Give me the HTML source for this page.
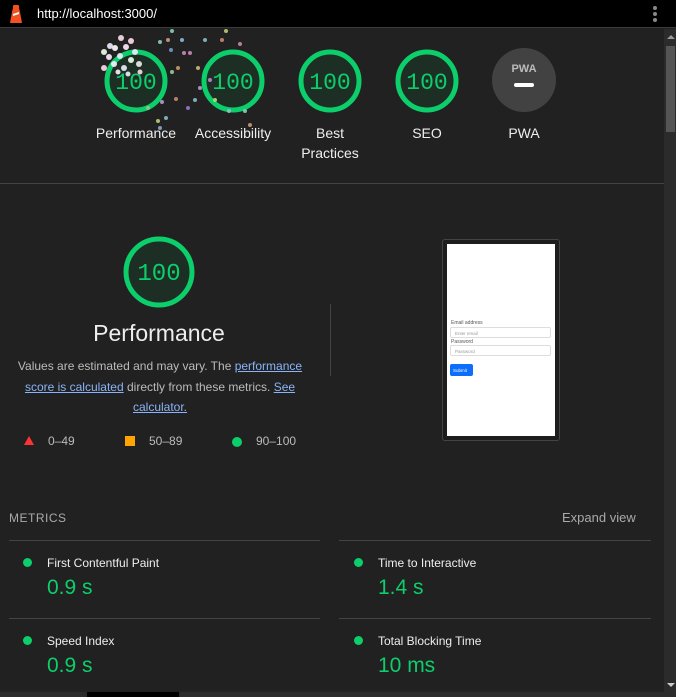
<!DOCTYPE html>
<html><head><meta charset="utf-8"><style>
*{margin:0;padding:0;box-sizing:border-box}
body{width:676px;height:697px;background:#212121;overflow:hidden;position:relative;font-family:"Liberation Sans",Arial,sans-serif;color:#fff}
.a{position:absolute}
.bar{left:0;top:0;width:676px;height:28px;background:#000;border-bottom:1px solid #3a3a3a}
.url{left:37px;top:6px;font-size:13px;color:#fff}
.lbl{font-size:14px;text-align:center;width:100px;line-height:20px;color:#eee}
a{color:#8ab4f8;text-decoration:underline}
.mt{font-size:12px;color:#eee}
.mv{font-size:21px;color:#0cce6b}
.dot{width:9px;height:9px;border-radius:50%;background:#0cce6b}
.hr{height:1px;background:#444}
</style></head><body>
<div class="a bar"></div>
<svg class="a" style="left:9px;top:5px" width="14" height="19" viewBox="0 0 14 19"><path d="M4 3h6l1 4 2 11H1L3 7z" fill="#f4511e"/><rect x="4" y="0" width="6" height="4" rx="1" fill="#f4511e"/><path d="M4 9l6-2v2l-6 2z" fill="#fff"/></svg>
<div class="a url">http://localhost:3000/</div>
<div class="a" style="left:653px;top:6px;width:4px;height:4px;border-radius:50%;background:#888"></div>
<div class="a" style="left:653px;top:12px;width:4px;height:4px;border-radius:50%;background:#888"></div>
<div class="a" style="left:653px;top:18px;width:4px;height:4px;border-radius:50%;background:#888"></div>
<div class="a" style="left:664px;top:29px;width:12px;height:668px;background:#2b2b2b"></div>
<div class="a" style="left:666px;top:46px;width:9px;height:86px;background:#555"></div>
<div class="a" style="left:667px;top:35px;width:0;height:0;border-left:4px solid transparent;border-right:4px solid transparent;border-bottom:4px solid #999"></div>
<div class="a" style="left:667px;top:683px;width:0;height:0;border-left:4px solid transparent;border-right:4px solid transparent;border-top:4px solid #ccc"></div>
<div class="a" style="left:0;top:692px;width:664px;height:5px;background:#2b2b2b"></div>
<div class="a" style="left:87px;top:692px;width:92px;height:5px;background:#000"></div>

<svg class="a" style="left:0;top:28px" width="664" height="140">
<g font-family="Liberation Mono, DejaVu Sans Mono, monospace" font-size="23" fill="#0cce6b" text-anchor="middle">
<circle cx="136" cy="53" r="29" fill="#1d2e24" stroke="#0cce6b" stroke-width="5"/><text x="136" y="61">100</text>
<circle cx="233" cy="53" r="29" fill="#1d2e24" stroke="#0cce6b" stroke-width="5"/><text x="233" y="61">100</text>
<circle cx="330" cy="53" r="29" fill="#1d2e24" stroke="#0cce6b" stroke-width="5"/><text x="330" y="61">100</text>
<circle cx="427" cy="53" r="29" fill="#1d2e24" stroke="#0cce6b" stroke-width="5"/><text x="427" y="61">100</text>
</g>
<circle cx="524" cy="52" r="32" fill="#424242"/>
<text x="524" y="44" font-size="11" font-weight="bold" fill="#bbb" text-anchor="middle" font-family="Liberation Sans">PWA</text>
<rect x="514" y="55" width="20" height="4" rx="2" fill="#fff"/>
<g opacity="0.9">
<circle cx="121" cy="10" r="3" fill="#fde"/><circle cx="131" cy="13" r="3" fill="#fde"/><circle cx="110" cy="18" r="3" fill="#eef"/><circle cx="104" cy="24" r="3" fill="#efe"/><circle cx="115" cy="20" r="3" fill="#fff"/><circle cx="126" cy="19" r="3" fill="#fef"/><circle cx="135" cy="24" r="3" fill="#eef"/><circle cx="109" cy="29" r="3" fill="#fef"/><circle cx="120" cy="28" r="3" fill="#eef"/><circle cx="131" cy="32" r="3" fill="#efe"/><circle cx="114" cy="36" r="3" fill="#fef"/><circle cx="104" cy="40" r="3" fill="#fde"/><circle cx="124" cy="40" r="3" fill="#eef"/><circle cx="139" cy="36" r="3" fill="#eee"/><circle cx="140" cy="44" r="2.5" fill="#fde"/><circle cx="118" cy="44" r="2.5" fill="#fef"/><circle cx="128" cy="46" r="2.5" fill="#eef"/>
<circle cx="172" cy="3" r="2" fill="#8cb"/><circle cx="160" cy="14" r="2" fill="#8cb"/><circle cx="168" cy="12" r="2" fill="#c98"/><circle cx="182" cy="12" r="2" fill="#8bd"/><circle cx="171" cy="22" r="2" fill="#79c"/><circle cx="184" cy="25" r="2" fill="#c8b"/><circle cx="190" cy="25" r="2" fill="#c8b"/><circle cx="178" cy="40" r="2" fill="#c96"/><circle cx="198" cy="40" r="2" fill="#cb7"/><circle cx="205" cy="12" r="2" fill="#8bc"/><circle cx="222" cy="12" r="2" fill="#c87"/><circle cx="240" cy="16" r="2" fill="#c8a"/><circle cx="226" cy="3" r="2" fill="#bc7"/><circle cx="162" cy="74" r="2" fill="#b9c"/><circle cx="176" cy="71" r="2" fill="#c87"/><circle cx="148" cy="80" r="2" fill="#8c8"/><circle cx="188" cy="80" r="2" fill="#97c"/><circle cx="195" cy="72" r="2" fill="#8bc"/><circle cx="200" cy="60" r="2" fill="#b9c"/><circle cx="215" cy="72" r="2" fill="#bd7"/><circle cx="229" cy="83" r="2" fill="#9bc"/><circle cx="245" cy="83" r="2" fill="#8cb"/><circle cx="250" cy="97" r="2" fill="#c97"/><circle cx="158" cy="93" r="2" fill="#bc7"/><circle cx="166" cy="90" r="2" fill="#8bc"/><circle cx="172" cy="44" r="2" fill="#9c9"/><circle cx="210" cy="52" r="2" fill="#b8c"/><circle cx="160" cy="100" r="2" fill="#8ac"/>
</g>
</svg>
<div class="a lbl" style="left:86px;top:123px">Performance</div>
<div class="a lbl" style="left:183px;top:123px">Accessibility</div>
<div class="a lbl" style="left:280px;top:123px">Best<br>Practices</div>
<div class="a lbl" style="left:377px;top:123px">SEO</div>
<div class="a lbl" style="left:474px;top:123px">PWA</div>
<div class="a hr" style="left:0;top:183px;width:664px"></div>

<svg class="a" style="left:120px;top:234px" width="80" height="80"><circle cx="39" cy="38" r="33" fill="#1d2e24" stroke="#0cce6b" stroke-width="5"/><text x="39" y="46" text-anchor="middle" font-family="Liberation Mono, monospace" font-size="24" fill="#0cce6b">100</text></svg>
<div class="a" style="left:0;top:320px;width:318px;text-align:center;font-size:23px;color:#eee">Performance</div>
<div class="a" style="left:12px;top:356px;width:296px;text-align:center;font-size:12px;line-height:20.5px;color:#bbb">Values are estimated and may vary. The <a>performance score is calculated</a> directly from these metrics. <a>See calculator.</a></div>
<div class="a" style="left:330px;top:304px;width:1px;height:72px;background:#444"></div>
<div class="a" style="left:24px;top:436px;width:0;height:0;border-left:5px solid transparent;border-right:5px solid transparent;border-bottom:9px solid #ff3333"></div>
<div class="a" style="left:48px;top:434px;font-size:12px;color:#bbb">0–49</div>
<div class="a" style="left:125px;top:436px;width:10px;height:10px;background:#ffa400"></div>
<div class="a" style="left:149px;top:434px;font-size:12px;color:#bbb">50–89</div>
<div class="a dot" style="left:232px;top:437px;width:10px;height:10px"></div>
<div class="a" style="left:256px;top:434px;font-size:12px;color:#bbb">90–100</div>

<div class="a" style="left:442px;top:239px;width:118px;height:202px;border:1px solid #444;border-radius:3px;background:#1d1d1d"></div>
<div class="a" style="left:447px;top:244px;width:108px;height:192px;background:#fff"></div>
<div class="a" style="left:451px;top:320px;font-size:5px;color:#555">Email address</div>
<div class="a" style="left:450px;top:327px;width:101px;height:11px;border:1px solid #ddd;border-radius:2px;font-size:4.5px;color:#999;padding:3px 4px">Enter email</div>
<div class="a" style="left:451px;top:339px;font-size:5px;color:#555">Password</div>
<div class="a" style="left:450px;top:345px;width:101px;height:11px;border:1px solid #ddd;border-radius:2px;font-size:4.5px;color:#999;padding:3px 4px">Password</div>
<div class="a" style="left:450px;top:364px;width:23px;height:12px;background:#0d6efd;border-radius:2px;font-size:4.5px;color:#fff;padding:4px 3px">Submit</div>

<div class="a" style="left:9px;top:511px;font-size:12px;color:#aaa;letter-spacing:0.5px">METRICS</div>
<div class="a" style="left:562px;top:510px;font-size:13px;color:#aaa">Expand view</div>
<div class="a hr" style="left:9px;top:540px;width:311px"></div>
<div class="a hr" style="left:339px;top:540px;width:312px"></div>
<div class="a hr" style="left:9px;top:618px;width:311px"></div>
<div class="a hr" style="left:339px;top:618px;width:312px"></div>
<div class="a dot" style="left:23px;top:558px"></div><div class="a mt" style="left:47px;top:556px">First Contentful Paint</div><div class="a mv" style="left:47px;top:576px">0.9 s</div>
<div class="a dot" style="left:354px;top:558px"></div><div class="a mt" style="left:378px;top:556px">Time to Interactive</div><div class="a mv" style="left:378px;top:576px">1.4 s</div>
<div class="a dot" style="left:23px;top:636px"></div><div class="a mt" style="left:47px;top:634px">Speed Index</div><div class="a mv" style="left:47px;top:654px">0.9 s</div>
<div class="a dot" style="left:354px;top:636px"></div><div class="a mt" style="left:378px;top:634px">Total Blocking Time</div><div class="a mv" style="left:378px;top:654px">10 ms</div>
</body></html>
